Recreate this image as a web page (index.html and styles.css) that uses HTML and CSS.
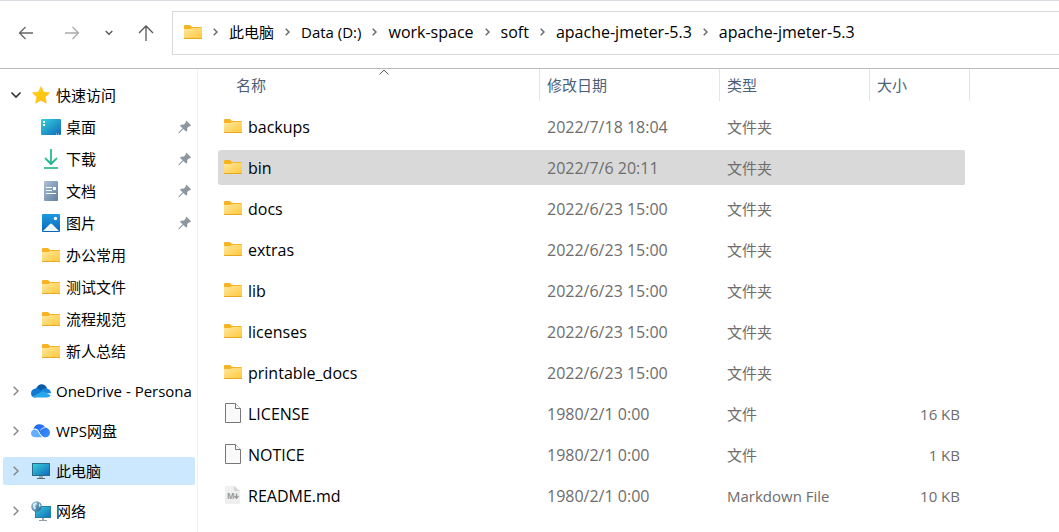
FILE: index.html
```
<!DOCTYPE html>
<html lang="zh-CN">
<head>
<meta charset="utf-8">
<title>apache-jmeter-5.3</title>
<link rel="stylesheet" href="styles.css">
</head>
<body>
<svg class="defs" aria-hidden="true">
  <defs>
    <linearGradient id="g-folder" x1="0" y1="0" x2="1" y2="1"><stop offset="0" stop-color="#ffe8a0"/><stop offset="1" stop-color="#ffc83a"/></linearGradient>
    <linearGradient id="g-screen" x1="0" y1="0" x2="1" y2="1"><stop offset="0" stop-color="#35d3dc"/><stop offset="1" stop-color="#1068b8"/></linearGradient>
    <linearGradient id="g-down" x1="0" y1="0" x2="0" y2="1"><stop offset="0" stop-color="#36c98a"/><stop offset="1" stop-color="#12a596"/></linearGradient>
    <linearGradient id="g-doc" x1="0" y1="0" x2="1" y2="1"><stop offset="0" stop-color="#adc0d6"/><stop offset="1" stop-color="#5f7e9f"/></linearGradient>
    <linearGradient id="g-pic" x1="0" y1="0" x2="0" y2="1"><stop offset="0" stop-color="#1c9be0"/><stop offset="1" stop-color="#0c66b8"/></linearGradient>
    <linearGradient id="g-star" x1="0" y1="0" x2="1" y2="1"><stop offset="0" stop-color="#ffd814"/><stop offset="1" stop-color="#ffb90c"/></linearGradient>
    <linearGradient id="g-wps" x1="0" y1="0" x2="1" y2="1"><stop offset="0" stop-color="#1a62ee"/><stop offset="1" stop-color="#3d92ff"/></linearGradient>
    <linearGradient id="g-globe" x1="0" y1="0" x2="1" y2="1"><stop offset="0" stop-color="#9cc4dc"/><stop offset="1" stop-color="#24678f"/></linearGradient>
  </defs>
  <symbol id="folder" viewBox="0 0 18 14"><path d="M0 1Q0 0 1 0H6L8 2H17Q18 2 18 3V6H0Z" fill="#f6b322"/><path d="M0 4H6.500L8 3H18V13.500H0Z" fill="url(#g-folder)"/><path d="M0 13.500H18" stroke="#e9a823"/></symbol>
  <symbol id="crumb" viewBox="0 0 5 8"><path d="M.7.7 4 4 .7 7.300" fill="none" stroke="#666" stroke-width="1.400"/></symbol>
  <symbol id="expand" viewBox="0 0 6 10"><path d="M.7.7 5 5 .7 9.300" fill="none" stroke="#858585" stroke-width="1.400"/></symbol>
  <symbol id="pin" viewBox="0 0 14 14"><path d="M8.500.8 13.200 5.500 12 6.200 10.800 6.400 9.300 8 9.200 10.800 8.200 11.800 5.400 9 1.200 13.200.5 13.300.6 12.600 4.600 8.300 2 5.700 3 4.700 6 4.600 7.500 3.100 7.600 1.800Z" fill="#8d979f"/></symbol>
  <symbol id="file" viewBox="0 0 18 20"><path d="M1.500.5H11.500L16.500 5.500V19.500H1.500Z" fill="#fafafa" stroke="#777"/><path d="M11.500.5V5.500H16.500" fill="#fff" stroke="#777"/></symbol>
</svg>

<header class="toolbar">
  <div class="history">
    <button class="tool" aria-label="后退"><svg width="16" height="14" viewBox="0 0 16 14"><path d="M7.500 1 1.500 7 7.500 13M1.500 7H15" fill="none" stroke="#666" stroke-width="1.300"/></svg></button>
    <button class="tool" aria-label="前进"><svg width="16" height="14" viewBox="0 0 16 14"><path d="M8.500 1 14.500 7 8.500 13M14.500 7H1" fill="none" stroke="#aaa" stroke-width="1.300"/></svg></button>
    <button class="tool recent" aria-label="最近浏览的位置"><svg width="8" height="6" viewBox="0 0 8 6"><path d="M.7 1 4 4.300 7.300 1" fill="none" stroke="#555" stroke-width="1.300"/></svg></button>
    <button class="tool" aria-label="上移"><svg width="16" height="16" viewBox="0 0 16 16"><path d="M1 8 8 1 15 8M8 1V16" fill="none" stroke="#555" stroke-width="1.300"/></svg></button>
  </div>
  <nav class="address" aria-label="地址">
    <svg class="folder"><use href="#folder"/></svg>
    <svg class="crumb"><use href="#crumb"/></svg><a href="#">此电脑</a>
    <svg class="crumb"><use href="#crumb"/></svg><a href="#">Data (D:)</a>
    <svg class="crumb"><use href="#crumb"/></svg><a class="latin" href="#">work-space</a>
    <svg class="crumb"><use href="#crumb"/></svg><a class="latin" href="#">soft</a>
    <svg class="crumb"><use href="#crumb"/></svg><a class="latin" href="#">apache-jmeter-5.3</a>
    <svg class="crumb"><use href="#crumb"/></svg><a class="latin" href="#">apache-jmeter-5.3</a>
  </nav>
</header>

<div class="content">
  <nav class="sidebar" aria-label="导航窗格">
    <ul class="tree">
      <li>
        <a class="node" href="#"><span class="toggle"><svg width="12" height="8" viewBox="0 0 12 8"><path d="M1.500 1.500 6 6 10.500 1.500" fill="none" stroke="#333" stroke-width="1.600"/></svg></span><span class="icon"><svg width="18" height="18" viewBox="0 0 18 18"><path d="M9 .5 11.600 6 17.700 6.800 13.200 11 14.400 17.200 9 14.200 3.600 17.200 4.800 11 .3 6.800 6.400 6Z" fill="url(#g-star)" stroke="#fcb913" stroke-width=".5" stroke-linejoin="round"/></svg></span><span class="label">快速访问</span></a>
        <ul class="children">
          <li><a class="leaf" href="#"><span class="icon"><svg width="20" height="16" viewBox="0 0 20 16"><rect width="20" height="16" rx="1" fill="url(#g-screen)"/><path d="M2 2h2v2H2zM2 5h2v2H2z" fill="#fff"/><path d="M15 15h1M17 15h1" stroke="#c5e5ff"/></svg></span><span class="label">桌面</span><svg class="pin"><use href="#pin"/></svg></a></li>
          <li><a class="leaf" href="#"><span class="icon"><svg width="16" height="20" viewBox="0 0 16 20"><path d="M2 9 8 15 14 9" fill="none" stroke="url(#g-down)" stroke-width="1.800"/><path d="M1 18.200H15V19.800H1Z" fill="#20b486"/><path d="M7.100 0H8.900V14H7.100Z" fill="#27bd88"/></svg></span><span class="label">下载</span><svg class="pin"><use href="#pin"/></svg></a></li>
          <li><a class="leaf" href="#"><span class="icon"><svg width="14" height="20" viewBox="0 0 14 20"><rect width="14" height="20" rx="1" fill="url(#g-doc)"/><path d="M2 6.500H8M2 9.500H8M2 12.500H12" stroke="#fff"/><path d="M9 6H12V9H9Z" fill="#fff"/></svg></span><span class="label">文档</span><svg class="pin"><use href="#pin"/></svg></a></li>
          <li><a class="leaf" href="#"><span class="icon"><svg width="18" height="18" viewBox="0 0 18 18"><rect width="18" height="18" rx="1" fill="url(#g-pic)"/><path d="M1 17 8 10Q9 9 10 10L17 17Z" fill="#eef7ff"/><circle cx="13.500" cy="4.500" r="1.700" fill="#fff"/></svg></span><span class="label">图片</span><svg class="pin"><use href="#pin"/></svg></a></li>
          <li><a class="leaf" href="#"><span class="icon"><svg class="folder"><use href="#folder"/></svg></span><span class="label">办公常用</span></a></li>
          <li><a class="leaf" href="#"><span class="icon"><svg class="folder"><use href="#folder"/></svg></span><span class="label">测试文件</span></a></li>
          <li><a class="leaf" href="#"><span class="icon"><svg class="folder"><use href="#folder"/></svg></span><span class="label">流程规范</span></a></li>
          <li><a class="leaf" href="#"><span class="icon"><svg class="folder"><use href="#folder"/></svg></span><span class="label">新人总结</span></a></li>
        </ul>
      </li>
      <li><a class="node" href="#"><span class="toggle"><svg width="6" height="10"><use href="#expand"/></svg></span><span class="icon"><svg width="20" height="14" viewBox="0 0 20 14"><path d="M5 5C6 1.500 9 0 11 .3 14 .5 15.500 2.500 16 4.500L10 8Z" fill="#0a5ba8"/><path d="M4 13.500C1.500 13.500 0 11.500 0 9.200 0 6.500 2 4.500 4.500 4.400 7 4 9 5.500 11 7L8 12Z" fill="#1479d1"/><path d="M10 6.500C12 4.500 14 4 16 4.500 18.500 5 20 7 20 9.300L12 9Z" fill="#1687d9"/><path d="M1.500 12.800 10 8Q12 6.800 14 8L19.500 11.300C19 12.700 17.500 13.500 16 13.500H4Q3 13.500 1.500 12.800Z" fill="#28a8ea"/></svg></span><span class="label">OneDrive - Persona</span></a></li>
      <li><a class="node" href="#"><span class="toggle"><svg width="6" height="10"><use href="#expand"/></svg></span><span class="icon"><svg width="20" height="14" viewBox="0 0 20 14"><path d="M2.500 5C3.500 1.500 6 .3 8.500.3 11 .3 13 1.500 14 3.500 17 3.800 19 6 19 8.500 19 11.500 17 13.300 14.500 13.300 11 13.300 9.500 10.500 7.500 7 6.500 5 5 4.300 2.500 5Z" fill="url(#g-wps)"/><path d="M14 3.800C11.500 3.800 10 5 9.300 6.500" fill="none" stroke="#dcebff" stroke-width=".9"/><path d="M4 5.200C1.500 5.500 0 7.200 0 9.300 0 11.700 2 13.300 4.500 13.300H12C8.500 12 8 5 4 5.200Z" fill="#62aeff"/><path d="M3.500 5C8 4.500 8 11.500 12 13.300" fill="none" stroke="#fff" stroke-width=".9"/></svg></span><span class="label">WPS网盘</span></a></li>
      <li><a class="node current" href="#" aria-current="true"><span class="toggle"><svg width="6" height="10"><use href="#expand"/></svg></span><span class="icon"><svg width="18" height="16" viewBox="0 0 18 16"><rect x=".5" y=".5" width="17" height="12" fill="url(#g-screen)" stroke="#286a88"/><path d="M7 13H11V15H7Z" fill="#9aaab5"/><path d="M5 15.500H13" stroke="#58656e"/></svg></span><span class="label">此电脑</span></a></li>
      <li><a class="node" href="#"><span class="toggle"><svg width="6" height="10"><use href="#expand"/></svg></span><span class="icon"><svg width="20" height="20" viewBox="0 0 20 20"><rect x="4.500" y="5.500" width="15" height="11" fill="url(#g-screen)" stroke="#2582a5"/><path d="M11 17H13V19H11Z" fill="#9aaab5"/><path d="M8 19.500H16" stroke="#93a0aa"/><circle cx="5.500" cy="5.500" r="5.300" fill="url(#g-globe)"/><path d="M2 3 5 1 6 3 4 5 5 7 3.500 9 2 6ZM8 2 10 5 8 6Z" fill="#d7e9f2"/></svg></span><span class="label">网络</span></a></li>
    </ul>
  </nav>

  <main class="files">
    <table class="list">
      <colgroup><col class="c-name"><col class="c-date"><col class="c-type"><col class="c-size"></colgroup>
      <thead>
        <tr>
          <th class="first" aria-sort="ascending"><button class="sort">名称<svg class="caret" width="10" height="6" viewBox="0 0 10 6"><path d="M.5 5.500 5 1 9.500 5.500" fill="none" stroke="#555"/></svg></button></th>
          <th><button class="sort">修改日期</button></th>
          <th><button class="sort">类型</button></th>
          <th><button class="sort">大小</button></th>
        </tr>
      </thead>
      <tbody>
        <tr><td><a class="name latin" href="#"><svg class="folder"><use href="#folder"/></svg>backups</a></td><td class="latin">2022/7/18 18:04</td><td>文件夹</td><td></td></tr>
        <tr class="selected"><td><a class="name latin" href="#"><svg class="folder"><use href="#folder"/></svg>bin</a></td><td class="latin">2022/7/6 20:11</td><td>文件夹</td><td></td></tr>
        <tr><td><a class="name latin" href="#"><svg class="folder"><use href="#folder"/></svg>docs</a></td><td class="latin">2022/6/23 15:00</td><td>文件夹</td><td></td></tr>
        <tr><td><a class="name latin" href="#"><svg class="folder"><use href="#folder"/></svg>extras</a></td><td class="latin">2022/6/23 15:00</td><td>文件夹</td><td></td></tr>
        <tr><td><a class="name latin" href="#"><svg class="folder"><use href="#folder"/></svg>lib</a></td><td class="latin">2022/6/23 15:00</td><td>文件夹</td><td></td></tr>
        <tr><td><a class="name latin" href="#"><svg class="folder"><use href="#folder"/></svg>licenses</a></td><td class="latin">2022/6/23 15:00</td><td>文件夹</td><td></td></tr>
        <tr><td><a class="name latin" href="#"><svg class="folder"><use href="#folder"/></svg>printable_docs</a></td><td class="latin">2022/6/23 15:00</td><td>文件夹</td><td></td></tr>
        <tr><td><a class="name latin" href="#"><svg class="file"><use href="#file"/></svg>LICENSE</a></td><td class="latin">1980/2/1 0:00</td><td>文件</td><td>16 KB</td></tr>
        <tr><td><a class="name latin" href="#"><svg class="file"><use href="#file"/></svg>NOTICE</a></td><td class="latin">1980/2/1 0:00</td><td>文件</td><td>1 KB</td></tr>
        <tr><td><a class="name latin" href="#"><svg class="file" viewBox="0 0 18 20"><path d="M2 1H10L16 6V18Q16 19 15 19H2Q1 19 1 18V2Q1 1 2 1Z" fill="#efefef"/><path d="M10 1V6H16Z" fill="#d6d6d6"/><text class="badge" x="3" y="14">M</text><path d="M12.500 8.500V13M10.500 11 12.500 13.300 14.500 11" fill="none" stroke="#999" stroke-width="1.300"/></svg>README.md</a></td><td class="latin">1980/2/1 0:00</td><td>Markdown File</td><td>10 KB</td></tr>
      </tbody>
    </table>
  </main>
</div>
</body>
</html>
```
FILE: styles.css
```
* { box-sizing: border-box; }
body {
  margin: 0;
  min-height: 100vh;
  display: flex;
  flex-direction: column;
  background: #fff;
  color: #000;
  font: 15px/20px "Open Sans", "Noto Sans CJK SC", sans-serif;
}
a { color: inherit; text-decoration: none; }
button { border: 0; padding: 0; background: none; font: inherit; color: inherit; }
svg { display: block; flex: none; }
ul { list-style: none; margin: 0; padding: 0; }
.latin { font-size: 16px; }
.defs { position: absolute; width: 0; height: 0; }
.folder { width: 18px; height: 14px; }
.crumb { width: 5px; height: 8px; }
.file { width: 18px; height: 20px; }
.pin { width: 14px; height: 14px; }

.toolbar {
  display: flex;
  align-items: center;
  gap: 3px;
  border-top: 1px solid #d9dde1;
  border-bottom: 1px solid #bababa;
  padding: 10px 0 13px 3px;
}
.history { display: flex; align-items: center; flex: none; }
.tool { display: grid; place-items: center; width: 46px; height: 32px; }
.recent { width: 28px; }
.address {
  flex: 1;
  display: flex;
  align-items: center;
  gap: 11px;
  height: 44px;
  padding: 0 0 2px 11px;
  border: 1px solid #d9d9d9;
  border-right: 0;
  white-space: nowrap;
  overflow: hidden;
}

.content { display: flex; flex: 1; }
.sidebar { flex: none; width: 198px; border-right: 1px solid #f2f2f2; padding: 12px 2px 7px 3px; }
.tree { display: flex; flex-direction: column; gap: 12px; }
.node, .leaf { display: flex; align-items: center; border-radius: 2px; white-space: nowrap; }
.node { height: 28px; padding-left: 6px; }
.current { background: #cce8ff; }
.children { padding-top: 2px; margin-bottom: -2px; }
.leaf { height: 32px; padding: 0 3px 0 38px; }
.toggle { display: grid; place-items: center; width: 14px; flex: none; }
.icon { display: grid; place-items: center; width: 20px; flex: none; }
.node .icon { margin-left: 8px; }
.label { flex: 1; margin-left: 5px; overflow: hidden; }

.files { flex: 1; min-width: 0; padding-left: 20px; }
.list { table-layout: fixed; width: 752px; border-collapse: separate; border-spacing: 0; }
.c-name { width: 322px; }
.c-date { width: 180px; }
.c-type { width: 150px; }
.c-size { width: 100px; }
th { padding: 0 0 5px; font-weight: 400; }
.first { padding-left: 11px; }
.sort {
  position: relative;
  display: block;
  width: 100%;
  height: 32px;
  padding-left: 7px;
  border-right: 1px solid #e5e5e5;
  color: #4c607a;
  text-align: left;
}
.caret { position: absolute; top: 0; left: 50%; margin-left: -5px; }
td {
  height: 41px;
  padding: 0 0 0 7px;
  border: solid transparent;
  border-width: 3px 0;
  background-clip: padding-box;
  color: #6d6d6d;
}
td:first-child { padding-left: 6px; border-radius: 5px 0 0 5px; }
td:last-child { padding-right: 5px; border-right-width: 5px; border-radius: 0 6px 6px 0; text-align: right; }
.selected td { background-color: #d9d9d9; }
.name { display: flex; align-items: center; gap: 6px; color: #000; }
.name svg { margin-bottom: 2px; }
.badge { font: bold 8px "Open Sans", sans-serif; fill: #999; }
```
